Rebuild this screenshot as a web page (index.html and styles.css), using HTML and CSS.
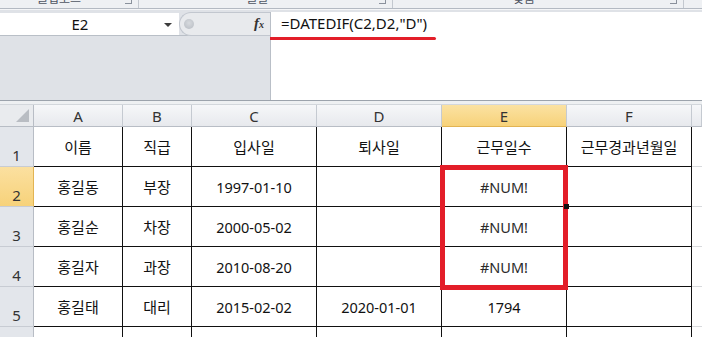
FILE: index.html
```html
<!DOCTYPE html>
<html lang="ko">
<head>
    <meta charset="UTF-8">
    <title>DATEDIF</title>
    <link rel="stylesheet" href="styles.css">
</head>
<body>
    <!-- ribbon, only the bottom edge is visible -->
    <div class="ribbon">
        <div class="group g-clip"><span class="label">클립보드</span><span class="launcher"></span></div>
        <div class="group g-font"><span class="label">글꼴</span><span class="launcher"></span></div>
        <div class="group g-align"><span class="label">맞춤</span><span class="launcher"></span></div>
    </div>

    <!-- name box + formula bar -->
    <div class="formula-area">
        <div class="left">
            <div class="name-row">
                <div class="name-box">
                    <span class="ref">E2</span>
                    <span class="arrow"></span>
                </div>
                <div class="knob">
                    <span class="dot"></span>
                    <span class="fx"><i>f</i><span class="x">x</span></span>
                </div>
            </div>
        </div>
        <div class="formula-box">
            <div class="formula">=DATEDIF(C2,D2,"D")</div>
            <div class="mark"></div>
        </div>
    </div>

    <div class="gap"></div>

    <!-- worksheet -->
    <div class="sheet">
        <div class="corner"><span class="tri"></span></div>
        <div class="col-head">A</div>
        <div class="col-head">B</div>
        <div class="col-head">C</div>
        <div class="col-head">D</div>
        <div class="col-head active">E</div>
        <div class="col-head">F</div>
        <div class="col-head last"></div>

        <div class="row-head">1</div>
        <div class="cell">이름</div>
        <div class="cell">직급</div>
        <div class="cell">입사일</div>
        <div class="cell">퇴사일</div>
        <div class="cell">근무일수</div>
        <div class="cell">근무경과년월일</div>
        <div class="cell empty"></div>

        <div class="row-head active">2</div>
        <div class="cell">홍길동</div>
        <div class="cell">부장</div>
        <div class="cell num">1997-01-10</div>
        <div class="cell"></div>
        <div class="cell num err">#NUM!</div>
        <div class="cell"></div>
        <div class="cell empty"></div>

        <div class="row-head">3</div>
        <div class="cell">홍길순</div>
        <div class="cell">차장</div>
        <div class="cell num">2000-05-02</div>
        <div class="cell"></div>
        <div class="cell num err">#NUM!</div>
        <div class="cell"></div>
        <div class="cell empty"></div>

        <div class="row-head">4</div>
        <div class="cell">홍길자</div>
        <div class="cell">과장</div>
        <div class="cell num">2010-08-20</div>
        <div class="cell"></div>
        <div class="cell num err">#NUM!</div>
        <div class="cell"></div>
        <div class="cell empty"></div>

        <div class="row-head">5</div>
        <div class="cell">홍길태</div>
        <div class="cell">대리</div>
        <div class="cell num">2015-02-02</div>
        <div class="cell num">2020-01-01</div>
        <div class="cell num">1794</div>
        <div class="cell"></div>
        <div class="cell empty"></div>

        <div class="row-head">6</div>
        <div class="cell"></div>
        <div class="cell"></div>
        <div class="cell"></div>
        <div class="cell"></div>
        <div class="cell"></div>
        <div class="cell"></div>
        <div class="cell empty"></div>

        <div class="highlight"></div>
        <div class="fill-handle"></div>
    </div>
</body>
</html>
```

FILE: styles.css
```css
body {
    margin: 0;
    width: 702px;
    height: 337px;
    overflow: hidden;
    background-color: #ffffff;
    font-family: "Noto Sans", "Noto Sans CJK KR", sans-serif;
    color: #111;
}

/* ribbon strip */
.ribbon {
    display: flex;
    height: 8px;
    background-color: #eef0f3;
    border-bottom: 1px solid #b3b9c2;
}

.group {
    position: relative;
    display: flex;
    justify-content: center;
    overflow: hidden;
    border-right: 1px solid #c3c8cf;
}

.g-clip { width: 138px; }
.g-font { width: 253px; }
.g-align { width: 290px; }

.label {
    margin-top: -8px;
    font-size: 12px;
    line-height: 12px;
    color: #4e5562;
    font-family: "Noto Sans CJK KR", sans-serif;
}

.g-clip .label { margin-right: 20px; }
.g-font .label { margin-right: 16px; }
.g-align .label { margin-right: 28px; }

.launcher {
    position: absolute;
    right: 6px;
    top: 0;
    width: 6px;
    height: 3px;
    border-right: 1px solid #8a919c;
    border-bottom: 1px solid #8a919c;
}

/* formula area */
.formula-area {
    display: flex;
    height: 92px;
    background-color: #dfe2e7;
    border-bottom: 1px solid #9ca3ac;
    box-sizing: border-box;
    padding-top: 3px;
    border-top: 1px solid #f4f5f7;
}

.left {
    width: 270px;
    flex-shrink: 0;
}

.name-row {
    display: flex;
    height: 22px;
    border-bottom: 1px solid #b9bfc7;
}

.name-box {
    position: relative;
    width: 179px;
    background-color: #ffffff;
    display: flex;
    align-items: center;
}

.ref {
    width: 160px;
    text-align: center;
    font-size: 15px;
}

.arrow {
    position: absolute;
    left: 164px;
    top: 10px;
    border-left: 4px solid transparent;
    border-right: 4px solid transparent;
    border-top: 4px solid #3c3c3c;
}

.knob {
    position: relative;
    flex: 1;
    background-color: #e8eaed;
    border: 1px solid #c2c7cf;
    border-right: none;
    border-radius: 12px 0 0 12px;
    margin-top: -1px;
    margin-bottom: -1px;
}

.dot {
    position: absolute;
    left: 4px;
    top: 6px;
    width: 10px;
    height: 10px;
    border-radius: 50%;
    background: radial-gradient(circle at 50% 40%, #d7dade, #b6bbc2);
}

.fx {
    position: absolute;
    right: 6px;
    top: 2px;
    font-family: "Liberation Serif", serif;
    font-weight: bold;
    font-style: italic;
    font-size: 15px;
    color: #333;
}

.fx .x {
    font-size: 10px;
}

.formula-box {
    flex: 1;
    background-color: #ffffff;
    border-left: 1px solid #b9bfc7;
    margin-top: -1px;
}

.formula {
    padding-left: 10px;
    font-size: 15px;
    line-height: 22px;
    color: #111;
}

.mark {
    width: 166px;
    height: 3px;
    margin-top: 3px;
    margin-left: -1px;
    background-color: #e31e29;
    border-radius: 0 2px 2px 0;
}

.gap {
    height: 3px;
    background-color: #eef0f2;
    border-bottom: 1px solid #d3d7dc;
}

/* sheet grid */
.sheet {
    position: relative;
    display: grid;
    grid-template-columns: 34px 89px 69px 125px 125px 125px 125px 1fr;
    grid-template-rows: 22px;
    grid-auto-rows: 40px;
}

.corner {
    position: relative;
    background-color: #e9ebee;
    border-right: 1px solid #b8bdc5;
    border-bottom: 1px solid #b8bdc5;
}

.tri {
    position: absolute;
    right: 4px;
    bottom: 4px;
    border-left: 13px solid transparent;
    border-bottom: 13px solid #b9bdc3;
}

.col-head {
    display: flex;
    align-items: center;
    justify-content: center;
    background: linear-gradient(#f6f7f9, #e7e9ed);
    border-right: 1px solid #c5cad1;
    border-bottom: 1px solid #b8bdc5;
    font-size: 15px;
    color: #333;
}

.col-head.active {
    background: linear-gradient(#fbe2a2, #f7d27a);
    border-bottom-color: #e2b453;
}

.row-head {
    display: flex;
    align-items: flex-end;
    justify-content: center;
    padding-bottom: 1px;
    background-color: #e3e6eb;
    border-right: 1px solid #b8bdc5;
    border-bottom: 1px solid #c8ccd3;
    font-size: 15px;
    line-height: 20px;
    color: #333;
}

.row-head.active {
    background: linear-gradient(#fbe0a0, #f7d27a);
    border-right-color: #e2b453;
}

.cell {
    display: flex;
    align-items: center;
    justify-content: center;
    border-right: 1px solid #111;
    border-bottom: 1px solid #111;
    font-size: 15px;
    font-family: "Noto Sans CJK KR", sans-serif;
}

.cell.num {
    font-family: "Noto Sans", "Noto Sans CJK KR", sans-serif;
    font-size: 14.5px;
}

.cell.err {
    color: #2a2a2a;
}

.cell.empty {
    border-right: none;
    border-bottom: 1px solid #d8dadd;
}

/* red annotation around E2:E4 */
.highlight {
    position: absolute;
    left: 440px;
    top: 60px;
    width: 128px;
    height: 125px;
    box-sizing: border-box;
    border: 5px solid #e31e29;
}

.fill-handle {
    position: absolute;
    left: 564px;
    top: 99px;
    width: 5px;
    height: 5px;
    background-color: #111;
}
```
